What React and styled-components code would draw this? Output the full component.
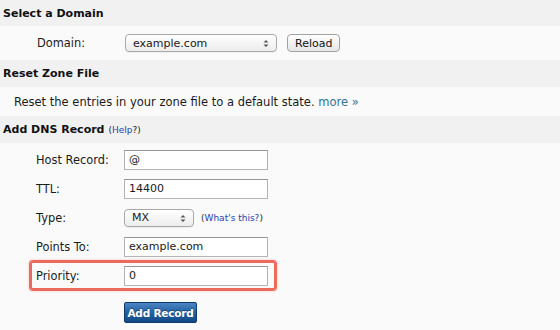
import React from "react";
import styled, { createGlobalStyle } from "styled-components";

const GlobalStyle = createGlobalStyle`
  body {
    margin: 0;
    background: #fafafa;
    font-family: "DejaVu Sans", Verdana, sans-serif;
    font-size: 11px;
    color: #1a1a1a;
  }
`;

const Page = styled.div`
  width: 560px;
  height: 330px;
  overflow: hidden;
  background: #fafafa;
`;

const SectionHeader = styled.div`
  background: #f1f1f1;
  height: ${(p) => p.h ?? 27}px;
  display: flex;
  align-items: center;
  padding-left: 3px;
  font-weight: bold;
  font-size: 11px;
  color: #111;
`;

const Small = styled.span`
  font-weight: normal;
  font-size: 9px;
  margin-left: 4px;
  color: #222;
  a {
    color: #2a3cb0;
    text-decoration: none;
  }
`;

const Row = styled.div`
  height: ${(p) => p.h ?? 33}px;
  display: flex;
  align-items: center;
  padding-left: ${(p) => p.pad ?? 37}px;
  background: #fafafa;
`;

const Label = styled.label`
  width: 88px;
  flex: none;
  font-size: 11.4px;
`;

const SelectWrap = styled.div`
  position: relative;
  width: ${(p) => p.w}px;
  height: 18px;
  box-sizing: border-box;
  border: 1px solid #a9a9a9;
  border-radius: 4px;
  background: linear-gradient(#ffffff, #ececec);
  display: flex;
  align-items: center;
  padding-left: 7px;
  font-size: 11px;
  box-shadow: 0 1px 0 rgba(0, 0, 0, 0.05);
`;

const Arrows = styled.svg`
  position: absolute;
  right: 7px;
  top: 4px;
`;

const Button = styled.button`
  height: 18px;
  box-sizing: border-box;
  margin-left: 10px;
  padding: 0 7px;
  border: 1px solid #a2a2a2;
  border-radius: 4px;
  background: linear-gradient(#ffffff, #e6e6e6);
  font-family: inherit;
  font-size: 11px;
  color: #111;
`;

const Text = styled.div`
  padding-left: 14px;
  font-size: 11.5px;
  a {
    color: #2f7394;
    text-decoration: none;
  }
`;

const Form = styled.div`
  padding-top: 2px;
  background: #fafafa;
`;

const FieldRow = styled.div`
  height: 29px;
  width: 240px;
  margin-left: 30px;
  padding-left: 6px;
  display: flex;
  align-items: center;
  border-radius: 3px;
  box-shadow: ${(p) =>
    p.highlight
      ? "0 0 0 1px #ea6a5c, inset 0 0 0 2px #ea6a5c, 0 0 3px 1px rgba(234,106,92,0.35)"
      : "none"};
`;

const Input = styled.div`
  width: 144px;
  height: 20px;
  box-sizing: border-box;
  border: 1px solid #b4b4b4;
  border-top-color: #959595;
  background: #fff;
  display: flex;
  align-items: center;
  padding-left: 4px;
  font-size: 11px;
`;

const Hint = styled.span`
  margin-left: 7px;
  font-size: 9px;
  color: #222;
  a {
    color: #2a3cb0;
    text-decoration: none;
  }
`;

const SubmitRow = styled.div`
  padding: 12px 0 0 124px;
`;

const Submit = styled.button`
  width: 73px;
  height: 21px;
  border: 1px solid #103a6a;
  border-radius: 2px;
  background: linear-gradient(#4a86c4, #2460a0 50%, #134a86);
  color: #fff;
  font-family: inherit;
  font-weight: bold;
  font-size: 10.5px;
  letter-spacing: -0.2px;
  white-space: nowrap;
  padding: 0;
  text-shadow: 0 -1px 0 rgba(0, 0, 0, 0.3);
`;

function SelectBox({ value, w }) {
  return (
    <SelectWrap w={w}>
      {value}
      <Arrows width="6" height="9" viewBox="0 0 6 9">
        <path d="M0.5 3.5 L3 1 L5.5 3.5 Z M0.5 5.5 L3 8 L5.5 5.5 Z" fill="#555" />
      </Arrows>
    </SelectWrap>
  );
}

export default function App() {
  return (
    <Page>
      <GlobalStyle />
      <SectionHeader h={26}>Select a Domain</SectionHeader>
      <Row h={34} pad={37}>
        <Label>Domain:</Label>
        <SelectBox value="example.com" w={152} />
        <Button>Reload</Button>
      </Row>
      <SectionHeader>Reset Zone File</SectionHeader>
      <Row h={29} pad={0}>
        <Text>
          Reset the entries in your zone file to a default state. <a href="#">more »</a>
        </Text>
      </Row>
      <SectionHeader h={27}>
        Add DNS Record
        <Small>
          (<a href="#">Help</a>?)
        </Small>
      </SectionHeader>
      <Form>
        <FieldRow>
          <Label>Host Record:</Label>
          <Input>@</Input>
        </FieldRow>
        <FieldRow>
          <Label>TTL:</Label>
          <Input>14400</Input>
        </FieldRow>
        <FieldRow>
          <Label>Type:</Label>
          <SelectBox value="MX" w={70} />
          <Hint>
            (<a href="#">What's this?</a>)
          </Hint>
        </FieldRow>
        <FieldRow>
          <Label>Points To:</Label>
          <Input>example.com</Input>
        </FieldRow>
        <FieldRow highlight>
          <Label>Priority:</Label>
          <Input>0</Input>
        </FieldRow>
        <SubmitRow>
          <Submit>Add Record</Submit>
        </SubmitRow>
      </Form>
    </Page>
  );
}
